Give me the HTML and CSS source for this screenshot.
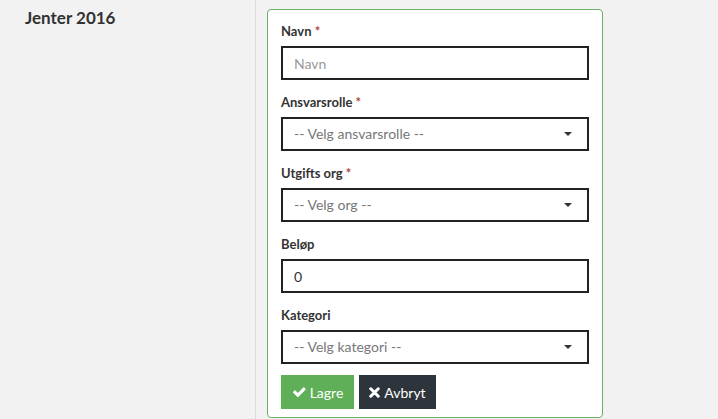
FILE: index.html
```html
<!DOCTYPE html>
<html lang="no">

<head>
    <meta charset="UTF-8">
    <meta name="viewport" content="width=device-width, initial-scale=1.0">
    <title>Jenter 2016</title>
    <link rel="stylesheet" href="styles.css">
</head>

<body>
    <div class="page">
        <div class="side">
            <h2>Jenter 2016</h2>
        </div>

        <div class="main">
            <form class="panel">
                <div class="group">
                    <label>Navn <span class="req">*</span></label>
                    <input type="text" placeholder="Navn">
                </div>

                <div class="group">
                    <label>Ansvarsrolle <span class="req">*</span></label>
                    <div class="select">-- Velg ansvarsrolle --</div>
                </div>

                <div class="group">
                    <label>Utgifts org <span class="req">*</span></label>
                    <div class="select">-- Velg org --</div>
                </div>

                <div class="group">
                    <label>Beløp</label>
                    <input type="text" value="0">
                </div>

                <div class="group last">
                    <label>Kategori</label>
                    <div class="select">-- Velg kategori --</div>
                </div>

                <div class="buttons">
                    <button type="button" class="btn btn-save">
                        <svg viewBox="0 200 1700 1400" width="14" height="12">
                            <path fill="#fff" d="M1671 566q0 40-28 68l-724 724-136 136q-28 28-68 28t-68-28l-136-136-362-362q-28-28-28-68t28-68l136-136q28-28 68-28t68 28l294 295 656-657q28-28 68-28t68 28l136 136q28 28 28 68z"/>
                        </svg>
                        Lagre
                    </button>
                    <button type="button" class="btn btn-cancel">
                        <svg viewBox="0 0 10 10" width="11" height="11">
                            <path d="M1.6 1.6 8.4 8.4 M8.4 1.6 1.6 8.4" stroke="#fff" stroke-width="2.8" stroke-linecap="round" fill="none"/>
                        </svg>
                        Avbryt
                    </button>
                </div>
            </form>
        </div>
    </div>
</body>

</html>
```

FILE: styles.css
```css
* {
    margin: 0;
    padding: 0;
    box-sizing: border-box;
}

body {
    background-color: #f2f2f2;
    font-family: Lato, "Open Sans", sans-serif;
    color: #333;
}

.page {
    display: flex;
    min-height: 419px;
}

.side {
    width: 256px;
    border-right: 1px solid #dcdcdc;
    padding: 8px 0 0 25px;
}

h2 {
    font-size: 17px;
    line-height: 20px;
    font-weight: 700;
    color: #333;
}

.main {
    padding: 9px 11px 0 11px;
}

.panel {
    width: 336px;
    background-color: white;
    border: 1px solid #6ab165;
    border-radius: 4px;
    padding: 11px 13px 8px 13px;
}

.group {
    margin-bottom: 12px;
}

.group.last {
    margin-bottom: 11px;
}

label {
    display: block;
    font-size: 13px;
    line-height: 20px;
    font-weight: 700;
    color: #333;
    margin-bottom: 5px;
}

.req {
    color: #a94442;
    font-weight: 700;
}

input,
.select {
    display: block;
    width: 100%;
    height: 34px;
    border: 2px solid #222;
    padding: 0 11px;
    font-family: Lato, "Open Sans", sans-serif;
    font-size: 14px;
    line-height: 30px;
    color: #333;
    background-color: white;
    outline: none;
}

input::placeholder {
    color: #9a9a9a;
}

.select {
    position: relative;
    color: #777;
}

.select::after {
    content: "";
    position: absolute;
    right: 15px;
    top: 13px;
    border-left: 4px solid transparent;
    border-right: 4px solid transparent;
    border-top: 4px solid #333;
}

.buttons {
    display: flex;
    gap: 5px;
}

.btn {
    display: flex;
    align-items: center;
    justify-content: center;
    gap: 4px;
    height: 34px;
    border: none;
    color: white;
    font-family: Lato, "Open Sans", sans-serif;
    font-size: 14px;
    padding: 0;
}

.btn svg {
    flex-shrink: 0;
}

.btn-save {
    width: 73px;
    background-color: #5fae58;
}

.btn-cancel {
    width: 77px;
    background-color: #2e343b;
}
```
